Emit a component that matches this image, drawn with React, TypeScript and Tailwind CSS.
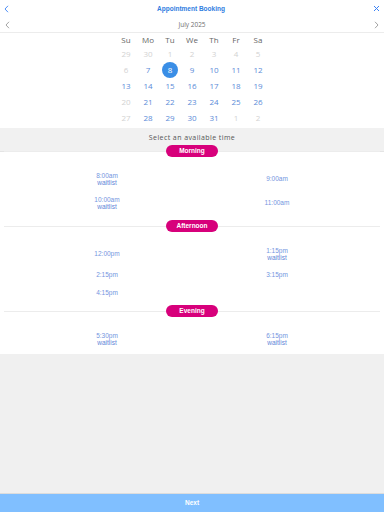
import React from "react";

type Slot = { time: string; waitlist?: boolean };
type Row = [Slot | null, Slot | null];

const weekdays = ["Su", "Mo", "Tu", "We", "Th", "Fr", "Sa"];

// [day, inMonth]
const weeks: [number, boolean][][] = [
  [[29, false], [30, false], [1, false], [2, false], [3, false], [4, false], [5, false]],
  [[6, false], [7, true], [8, true], [9, true], [10, true], [11, true], [12, true]],
  [[13, true], [14, true], [15, true], [16, true], [17, true], [18, true], [19, true]],
  [[20, false], [21, true], [22, true], [23, true], [24, true], [25, true], [26, true]],
  [[27, false], [28, true], [29, true], [30, true], [31, true], [1, false], [2, false]],
];

const sections: { name: string; rows: Row[]; top: string }[] = [
  {
    name: "Morning",
    top: "-mt-[7px]",
    rows: [
      [{ time: "8:00am", waitlist: true }, { time: "9:00am" }],
      [{ time: "10:00am", waitlist: true }, { time: "11:00am" }],
    ],
  },
  {
    name: "Afternoon",
    top: "mt-[5px]",
    rows: [
      [{ time: "12:00pm" }, { time: "1:15pm", waitlist: true }],
      [{ time: "2:15pm" }, { time: "3:15pm" }],
      [{ time: "4:15pm" }, null],
    ],
  },
  {
    name: "Evening",
    top: "mt-[3px]",
    rows: [[{ time: "5:30pm", waitlist: true }, { time: "6:15pm", waitlist: true }]],
  },
];

function Chevron({ dir, color }: { dir: "left" | "right"; color: string }) {
  return (
    <svg width="5" height="8" viewBox="0 0 5 8" fill="none">
      <path
        d={dir === "left" ? "M4 0.8 L1 4 L4 7.2" : "M1 0.8 L4 4 L1 7.2"}
        stroke={color}
        strokeWidth="0.9"
      />
    </svg>
  );
}

function Divider({ label, className }: { label: string; className: string }) {
  return (
    <div className={`relative z-10 flex items-center px-1 ${className}`}>
      <div className="h-px flex-1 bg-[#ececec]" />
      <div className="flex h-[12px] w-[52px] items-center justify-center rounded-full bg-[#d7007b] text-[6.5px] font-bold text-white">
        {label}
      </div>
      <div className="h-px flex-1 bg-[#ececec]" />
    </div>
  );
}

export default function App() {
  return (
    <div className="flex h-[512px] w-[384px] flex-col bg-[#f0f0f0] font-['Liberation_Sans',Arial,sans-serif]">
      <div className="bg-white">
        {/* header */}
        <div className="flex h-[17px] items-center justify-between px-[4px]">
          <Chevron dir="left" color="#3b82f6" />
          <span className="text-[6.5px] font-semibold text-[#2f7de1]">Appointment Booking</span>
          <svg width="7" height="7" viewBox="0 0 7 7">
            <path d="M1 1 L6 6 M6 1 L1 6" stroke="#3b82f6" strokeWidth="1" />
          </svg>
        </div>
        <div className="flex h-[16px] items-center justify-between border-b border-[#ececec] px-[5px] font-['Open_Sans',sans-serif]">
          <Chevron dir="left" color="#9a9a9a" />
          <span className="text-[6.5px] text-[#707070]">July 2025</span>
          <Chevron dir="right" color="#9a9a9a" />
        </div>

        {/* calendar */}
        <div className="mx-auto w-[154px] pb-[2px] font-['Open_Sans',sans-serif] text-[8px]">
          <div className="grid h-[13px] grid-cols-7 items-center text-center text-[#666]">
            {weekdays.map((d) => (
              <span key={d}>{d}</span>
            ))}
          </div>
          {weeks.map((w, i) => (
            <div key={i} className="grid h-[16px] grid-cols-7 items-center justify-items-center">
              {w.map(([d, inMonth], j) =>
                i === 1 && d === 8 ? (
                  <span
                    key={j}
                    className="flex h-[16px] w-[16px] items-center justify-center rounded-full bg-[#3a8ee6] text-white"
                  >
                    {d}
                  </span>
                ) : (
                  <span key={j} className={inMonth ? "text-[#5b8bd8]" : "text-[#d2d2d2]"}>
                    {d}
                  </span>
                )
              )}
            </div>
          ))}
        </div>

        {/* select band */}
        <div className="flex h-[24px] items-center justify-center border-b border-[#e4e4e4] bg-[#f1f1f1] pb-[2px] font-['Open_Sans',sans-serif] text-[7px] tracking-[0.06em] text-[#555]">
          Select an available time
        </div>

        {sections.map((s) => (
          <div key={s.name}>
            <Divider label={s.name} className={s.top} />
            <div className="mx-[22px] mt-[10px]">
              {s.rows.map((r, i) => {
                const tall = r.some((c) => c?.waitlist);
                return (
                  <div
                    key={i}
                    className={`grid grid-cols-2 items-center text-center text-[6.5px] leading-[7.5px] ${tall ? "h-[24px]" : "h-[18px]"}`}
                  >
                    {r.map((c, k) =>
                      c ? (
                        <div key={k} className="flex flex-col items-center">
                          <span className="text-[#7495e0]">{c.time}</span>
                          {c.waitlist && <span className="text-[#5f86d8]">waitlist</span>}
                        </div>
                      ) : (
                        <div key={k} />
                      )
                    )}
                  </div>
                );
              })}
            </div>
          </div>
        ))}
        <div className="h-[3px]" />
      </div>

      <div className="flex-1" />
      <button className="flex h-[19px] items-center justify-center border-t border-[#dcdcdc] bg-[#80bfff] text-[6.5px] font-bold text-white">
        Next
      </button>
    </div>
  );
}
